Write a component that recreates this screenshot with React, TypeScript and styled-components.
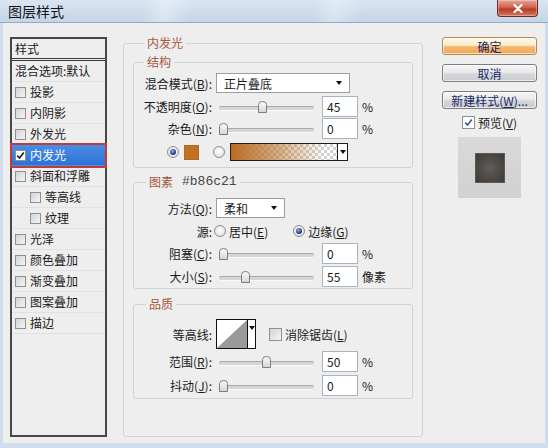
import React from 'react';
import styled, {createGlobalStyle} from 'styled-components';

const GlobalStyle = createGlobalStyle`
  * { box-sizing: border-box; }
  html, body { margin: 0; padding: 0; background: #eeeeee; }
  body {
    font-family: "Noto Sans CJK SC", "Liberation Sans", sans-serif;
    font-size: 12px;
    color: #1a1a1a;
  }
`;

type StyleItem = {label: string; checked?: boolean; selected?: boolean; indent?: boolean};

const styleItems: StyleItem[] = [
  {label: '投影'},
  {label: '内阴影'},
  {label: '外发光'},
  {label: '内发光', checked: true, selected: true},
  {label: '斜面和浮雕'},
  {label: '等高线', indent: true},
  {label: '纹理', indent: true},
  {label: '光泽'},
  {label: '颜色叠加'},
  {label: '渐变叠加'},
  {label: '图案叠加'},
  {label: '描边'},
];

const CheckMark = ({color = '#222'}: {color?: string}) => (
  <svg width="9" height="9" viewBox="0 0 9 9">
    <path d="M1.2 4.6 L3.6 7 L7.8 1.6" fill="none" stroke={color} strokeWidth="1.7" />
  </svg>
);

const SliderControl = ({pct}: {pct: number}) => (
  <Slider>
    <Thumb style={{left: `${pct * 86}px`}}>
      <svg width="9" height="12" viewBox="0 0 9 12">
        <defs>
          <linearGradient id="thumbFill" x1="0" y1="0" x2="0" y2="1">
            <stop offset="0" stopColor="#fdfdfd" />
            <stop offset="1" stopColor="#d4d4d4" />
          </linearGradient>
        </defs>
        <path d="M0.5 11.5 V3.5 Q0.5 0.5 4.5 0.5 Q8.5 0.5 8.5 3.5 V11.5 Z" fill="url(#thumbFill)" stroke="#7d7d7d" />
      </svg>
    </Thumb>
  </Slider>
);

export default function App() {
  return (
    <>
      <GlobalStyle />
      <Window>
        <TitleBar>
          <Title>图层样式</Title>
          <CloseButton>
            <svg width="10" height="9" viewBox="0 0 10 9">
              <path d="M1.5 1 L8.5 8 M8.5 1 L1.5 8" stroke="#fff" strokeWidth="2.2" strokeLinecap="round" />
            </svg>
          </CloseButton>
        </TitleBar>

        <Body>
          <StylePanel>
            <PanelHeader>样式</PanelHeader>
            <StyleRow>
              <ItemText $first>混合选项:默认</ItemText>
            </StyleRow>
            {styleItems.map((item) => (
              <StyleRow key={item.label} $indent={item.indent} $selected={item.selected}>
                <Checkbox $checked={item.checked}>{item.checked && <CheckMark />}</Checkbox>
                <ItemText>{item.label}</ItemText>
              </StyleRow>
            ))}
          </StylePanel>

          <OuterGroup>
            <Legend $ml={11}>内发光</Legend>

            <SubGroup $mt={0} $pb={6}>
              <Legend $ml={10}>结构</Legend>
              <FieldRow $h={20} $mt={4}>
                <Label>
                  混合模式(<u>B</u>):
                </Label>
                <Select $w={134}>
                  正片叠底
                  <Arrow />
                </Select>
              </FieldRow>
              <FieldRow $h={21} $mt={3}>
                <Label>
                  不透明度(<u>O</u>):
                </Label>
                <SliderControl pct={0.45} />
                <NumberInput>45</NumberInput>
                <Unit>%</Unit>
              </FieldRow>
              <FieldRow $h={21} $mt={1}>
                <Label>
                  杂色(<u>N</u>):
                </Label>
                <SliderControl pct={0} />
                <NumberInput>0</NumberInput>
                <Unit>%</Unit>
              </FieldRow>
              <ColorRow>
                <Radio $on />
                <Swatch />
                <Radio $gap={14} />
                <GradientBar>
                  <GradientArrow>
                    <Arrow />
                  </GradientArrow>
                </GradientBar>
              </ColorRow>
            </SubGroup>

            <SubGroup $mt={7} $pb={1}>
              <Legend $ml={12}>
                图素<Hex>#b86c21</Hex>
              </Legend>
              <FieldRow $h={20} $mt={9}>
                <Label>
                  方法(<u>Q</u>):
                </Label>
                <Select $w={69}>
                  柔和
                  <Arrow />
                </Select>
              </FieldRow>
              <FieldRow $h={20} $mt={3}>
                <Label>源:</Label>
                <Radio />
                <RadioText>
                  居中(<u>E</u>)
                </RadioText>
                <Radio $on $gap={25} />
                <RadioText>
                  边缘(<u>G</u>)
                </RadioText>
              </FieldRow>
              <FieldRow $h={21} $mt={2}>
                <Label>
                  阻塞(<u>C</u>):
                </Label>
                <SliderControl pct={0} />
                <NumberInput>0</NumberInput>
                <Unit>%</Unit>
              </FieldRow>
              <FieldRow $h={21} $mt={2}>
                <Label>
                  大小(<u>S</u>):
                </Label>
                <SliderControl pct={0.25} />
                <NumberInput>55</NumberInput>
                <Unit>像素</Unit>
              </FieldRow>
            </SubGroup>

            <SubGroup $mt={8} $pb={2}>
              <Legend $ml={12}>品质</Legend>
              <FieldRow $h={30} $mt={8}>
                <Label>等高线:</Label>
                <ContourPicker>
                  <svg width="30" height="28" viewBox="0 0 30 28">
                    <rect width="30" height="28" fill="#fff" />
                    <path d="M0 28 L30 0 L30 28 Z" fill="#9a9a9a" />
                  </svg>
                  <ContourArrow>
                    <Arrow />
                  </ContourArrow>
                </ContourPicker>
                <Checkbox $size={13} $gap={13} />
                <RadioText>
                  消除锯齿(<u>L</u>)
                </RadioText>
              </FieldRow>
              <FieldRow $h={21} $mt={2}>
                <Label>
                  范围(<u>R</u>):
                </Label>
                <SliderControl pct={0.5} />
                <NumberInput>50</NumberInput>
                <Unit>%</Unit>
              </FieldRow>
              <FieldRow $h={21} $mt={3}>
                <Label>
                  抖动(<u>J</u>):
                </Label>
                <SliderControl pct={0} />
                <NumberInput>0</NumberInput>
                <Unit>%</Unit>
              </FieldRow>
            </SubGroup>
          </OuterGroup>

          <RightColumn>
            <ButtonStack>
              <Button $primary>确定</Button>
              <Button>取消</Button>
              <Button>
                新建样式(<u>W</u>)...
              </Button>
            </ButtonStack>
            <PreviewCheck>
              <Checkbox $size={13} $checked>
                <CheckMark color="#3d5a9e" />
              </Checkbox>
              <RadioText>
                预览(<u>V</u>)
              </RadioText>
            </PreviewCheck>
            <PreviewBox>
              <PreviewLayer />
            </PreviewBox>
          </RightColumn>
        </Body>
      </Window>
    </>
  );
}

const Window = styled.div`
  width: 548px;
  height: 448px;
  display: flex;
  flex-direction: column;
  overflow: hidden;
`;

const TitleBar = styled.div`
  flex: none;
  height: 23px;
  display: flex;
  align-items: flex-start;
  justify-content: space-between;
  padding-left: 8px;
  border-bottom: 1px solid #95aac2;
  background:
    linear-gradient(100deg, transparent 0 26%, rgba(255, 255, 255, 0.35) 30%, transparent 35%,
      transparent 57%, rgba(255, 255, 255, 0.3) 61%, transparent 66%),
    linear-gradient(#d9e5f2, #c3d5e8);
`;

const Title = styled.span`
  font-size: 14px;
  line-height: 22px;
  color: #141414;
`;

const CloseButton = styled.div`
  width: 41px;
  height: 17px;
  margin-right: 10px;
  display: flex;
  align-items: center;
  justify-content: center;
  border: 1px solid #6d2a20;
  border-top: none;
  border-radius: 0 0 4px 4px;
  background: linear-gradient(#e6a596, #d1634f 45%, #b93b25 58%, #d57a62);
  box-shadow: inset 0 0 0 1px rgba(255, 255, 255, 0.3);
`;

const Body = styled.div`
  flex: 1;
  display: flex;
  align-items: stretch;
  padding: 14px 0 6px 7px;
  border: 3px solid #cfdded;
  border-top: none;
  border-bottom-width: 5px;
  background: #eeeeee;
`;

const StylePanel = styled.div`
  width: 97px;
  flex: none;
  display: flex;
  flex-direction: column;
  border: 2px solid #474747;
`;

const PanelHeader = styled.div`
  height: 22px;
  display: flex;
  align-items: center;
  padding-left: 3px;
  border-bottom: 3px double #3a3a3a;
`;

const StyleRow = styled.div<{$indent?: boolean; $selected?: boolean}>`
  height: 21px;
  flex: none;
  display: flex;
  align-items: center;
  padding-left: ${(p) => (p.$indent ? 18 : 3)}px;
  border-bottom: 1px solid #e1e1e1;
  ${(p) =>
    p.$selected &&
    `
    background: linear-gradient(#4a8ee6, #2f72d6);
    color: #fff;
    border-bottom-color: transparent;
    outline: 2px solid #c23a3a;
    position: relative;
    z-index: 1;
  `}
`;

const ItemText = styled.span<{$first?: boolean}>`
  margin-left: ${(p) => (p.$first ? 0 : 4)}px;
  white-space: nowrap;
  line-height: 14px;
`;

const Checkbox = styled.span<{$checked?: boolean; $size?: number; $gap?: number}>`
  flex: none;
  width: ${(p) => p.$size ?? 11}px;
  height: ${(p) => p.$size ?? 11}px;
  margin-left: ${(p) => p.$gap ?? 0}px;
  display: inline-flex;
  align-items: center;
  justify-content: center;
  border: 1px solid #8f8f8f;
  background: ${(p) => (p.$checked ? '#ffffff' : 'linear-gradient(135deg, #d3d3d3, #f5f5f5)')};
`;

const GroupBox = styled.fieldset`
  margin: 0;
  min-width: 0;
  border: 1px solid #cdd3d9;
  border-radius: 3px;
`;

const OuterGroup = styled(GroupBox)`
  width: 300px;
  flex: none;
  margin: -1px 0 0 16px;
  padding: 5px 9px 0 9px;
`;

const SubGroup = styled(GroupBox)<{$mt: number; $pb: number}>`
  margin-top: ${(p) => p.$mt}px;
  padding: 0 0 ${(p) => p.$pb}px 0;
`;

const Legend = styled.legend<{$ml: number}>`
  margin-left: ${(p) => p.$ml}px;
  padding: 0 3px;
  font-size: 12px;
  line-height: 14px;
  color: #a5583a;
`;

const Hex = styled.span`
  margin-left: 9px;
  font-family: "Liberation Mono", "DejaVu Sans Mono", monospace;
  font-size: 13px;
  line-height: 14px;
  vertical-align: top;
  color: #454545;
`;

const FieldRow = styled.div<{$h: number; $mt: number}>`
  height: ${(p) => p.$h}px;
  margin-top: ${(p) => p.$mt}px;
  display: flex;
  align-items: center;
`;

const Label = styled.span`
  width: 80px;
  flex: none;
  padding-right: 2px;
  text-align: right;
  white-space: nowrap;
`;

const Select = styled.div<{$w: number}>`
  width: ${(p) => p.$w}px;
  height: 100%;
  margin-left: 2px;
  display: flex;
  align-items: center;
  justify-content: space-between;
  padding: 0 7px 0 7px;
  background: #fff;
  border: 1px solid #9d9d9d;
`;

const Arrow = styled.span`
  width: 0;
  height: 0;
  border-left: 3.5px solid transparent;
  border-right: 3.5px solid transparent;
  border-top: 4px solid #111;
`;

const Slider = styled.div`
  position: relative;
  width: 95px;
  height: 12px;
  margin-left: 5px;
  flex: none;

  &::before {
    content: '';
    position: absolute;
    left: 0;
    right: 0;
    top: 5px;
    height: 3px;
    border-radius: 2px;
    background: #d6d6d6;
    border-top: 1px solid #a9a9a9;
    border-bottom: 1px solid #fafafa;
  }
`;

const Thumb = styled.span`
  position: absolute;
  top: 0;
  width: 9px;
  height: 12px;
  display: block;

  & > svg {
    display: block;
  }
`;

const NumberInput = styled.div`
  width: 36px;
  height: 21px;
  margin-left: 8px;
  flex: none;
  display: flex;
  align-items: center;
  padding-left: 4px;
  background: #fff;
  border: 1px solid #a9b4c1;
`;

const Unit = styled.span`
  margin-left: 4px;
`;

const ColorRow = styled.div`
  height: 18px;
  margin-top: 4px;
  padding-left: 33px;
  display: flex;
  align-items: center;
`;

const Radio = styled.span<{$on?: boolean; $gap?: number}>`
  flex: none;
  width: 12px;
  height: 12px;
  margin-left: ${(p) => p.$gap ?? 0}px;
  display: inline-flex;
  align-items: center;
  justify-content: center;
  border-radius: 50%;
  border: 1px solid #8d8d8d;
  background: radial-gradient(circle at 50% 40%, #ffffff, #d9d9d9);

  &::after {
    content: '';
    display: ${(p) => (p.$on ? 'block' : 'none')};
    width: 6px;
    height: 6px;
    border-radius: 50%;
    background: radial-gradient(circle at 40% 35%, #9aa8e6, #1c2b7c 70%);
  }
`;

const RadioText = styled.span`
  margin-left: 3px;
  white-space: nowrap;
`;

const Swatch = styled.span`
  width: 15px;
  height: 15px;
  margin-left: 5px;
  flex: none;
  background: #c1721f;
  border: 1px solid #a96a30;
`;

const GradientBar = styled.div`
  width: 118px;
  height: 18px;
  margin-left: 5px;
  display: flex;
  justify-content: flex-end;
  border: 1px solid #1d1d1d;
  background:
    linear-gradient(90deg, #b86c21 0%, rgba(184, 108, 33, 0.55) 40%, rgba(184, 108, 33, 0) 80%),
    repeating-conic-gradient(#d2d2d2 0 25%, #ffffff 0 50%) 0 0 / 6px 6px;
`;

const GradientArrow = styled.span`
  width: 10px;
  display: flex;
  align-items: center;
  justify-content: center;
  background: #fff;
  border-left: 1px solid #1d1d1d;
`;

const ContourPicker = styled.div`
  width: 40px;
  height: 30px;
  margin-left: 2px;
  flex: none;
  display: flex;
  border: 1px solid #111;
  background: #fff;

  & > svg {
    display: block;
  }
`;

const ContourArrow = styled.span`
  flex: 1;
  display: flex;
  justify-content: center;
  padding-top: 6px;
  border-left: 1px solid #111;
`;

const RightColumn = styled.div`
  width: 95px;
  flex: none;
  margin-left: 19px;
  display: flex;
  flex-direction: column;
  align-items: center;
`;

const ButtonStack = styled.div`
  width: 100%;
  display: flex;
  flex-direction: column;
  gap: 9px;
`;

const Button = styled.div<{$primary?: boolean}>`
  height: 18px;
  display: flex;
  align-items: center;
  justify-content: center;
  white-space: nowrap;
  color: #1a2766;
  border-radius: 3px;
  border: 1px solid ${(p) => (p.$primary ? '#b08c5a' : '#7d7f83')};
  background: ${(p) =>
    p.$primary
      ? 'linear-gradient(#fdf7e6 0%, #fbeccc 45%, #f6b86e 55%, #f2a955 100%)'
      : 'linear-gradient(#f5f5f5 0%, #eaeaea 45%, #d5d7da 55%, #c9ccd0 100%)'};
  box-shadow: inset 0 0 0 1px rgba(255, 255, 255, 0.6);
`;

const PreviewCheck = styled.div`
  height: 16px;
  margin-top: 5px;
  display: flex;
  align-items: center;
`;

const PreviewBox = styled.div`
  width: 63px;
  height: 61px;
  margin-top: 7px;
  display: flex;
  align-items: center;
  justify-content: center;
  background: linear-gradient(#d9d9d9, #d1d1d1);
`;

const PreviewLayer = styled.div`
  width: 30px;
  height: 30px;
  background: radial-gradient(circle, #5f5f5f 0%, #4d4944 55%, #3f3a35 100%);
  border: 1px solid #5e5852;
`;
